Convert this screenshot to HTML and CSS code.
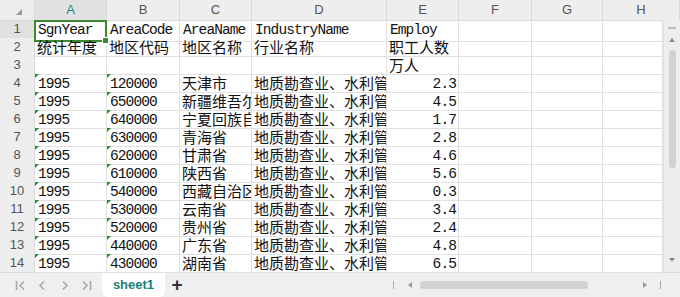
FILE: index.html
```html
<!DOCTYPE html>
<html lang="zh-CN">
<head>
    <meta charset="UTF-8">
    <title>sheet1</title>
    <link rel="stylesheet" href="styles.css">
</head>
<body>
    <div class="book">
        <!-- Column headers -->
        <div class="head-row">
            <div class="corner"><span class="corner-mark"></span></div>
            <div class="col-head active">A</div>
            <div class="col-head">B</div>
            <div class="col-head">C</div>
            <div class="col-head">D</div>
            <div class="col-head">E</div>
            <div class="col-head">F</div>
            <div class="col-head">G</div>
            <div class="col-head">H</div>
            <div class="col-head end"></div>
        </div>

        <div class="body">
            <div class="rows" id="rows"></div>
            <div class="vscroll">
                <span class="vs-line"></span>
                <span class="vs-up"></span>
                <span class="vs-thumb"></span>
                <span class="vs-down"></span>
            </div>
        </div>

        <!-- Sheet tabs and horizontal scroll -->
        <div class="tabbar">
            <div class="tab-nav">
                <svg class="nav" width="11" height="11" viewBox="0 0 11 11"><path d="M1.5 1v9M9 1.5L5 5.5L9 9.5" fill="none" stroke="#a8a8a8" stroke-width="1.6"/></svg>
                <svg class="nav" width="11" height="11" viewBox="0 0 11 11"><path d="M7 1.5L3 5.5L7 9.5" fill="none" stroke="#a8a8a8" stroke-width="1.6"/></svg>
                <svg class="nav" width="11" height="11" viewBox="0 0 11 11"><path d="M4 1.5L8 5.5L4 9.5" fill="none" stroke="#a8a8a8" stroke-width="1.6"/></svg>
                <svg class="nav" width="11" height="11" viewBox="0 0 11 11"><path d="M2 1.5L6 5.5L2 9.5M9.5 1v9" fill="none" stroke="#a8a8a8" stroke-width="1.6"/></svg>
            </div>
            <div class="tab">sheet1</div>
            <div class="add-tab">+</div>
            <div class="hscroll">
                <span class="hs-line"></span>
                <span class="hs-left"></span>
                <span class="hs-thumb"></span>
                <span class="hs-right"></span>
                <span class="hs-line"></span>
            </div>
        </div>
    </div>

    <script>
        const codes = ['120000', '650000', '640000', '630000', '620000', '610000', '540000', '530000', '520000', '440000', '430000'];
        const areas = ['天津市', '新疆维吾尔自治区', '宁夏回族自治区', '青海省', '甘肃省', '陕西省', '西藏自治区', '云南省', '贵州省', '广东省', '湖南省'];
        const employ = ['2.3', '4.5', '1.7', '2.8', '4.6', '5.6', '0.3', '3.4', '2.4', '4.8', '6.5'];

        const rows = [
            [['SgnYear', 'mono'], ['AreaCode', 'mono'], ['AreaName', 'mono'], ['IndustryName', 'mono'], ['Employ', 'mono']],
            [['统计年度', 'zh'], ['地区代码', 'zh'], ['地区名称', 'zh'], ['行业名称', 'zh'], ['职工人数', 'zh']],
            [['', ''], ['', ''], ['', ''], ['', ''], ['万人', 'zh']]
        ];
        codes.forEach((code, i) => {
            rows.push([
                ['1995', 'mono flag'],
                [code, 'mono flag'],
                [areas[i], 'zh'],
                ['地质勘查业、水利管理业', 'zh'],
                [employ[i], 'mono num']
            ]);
        });

        const container = document.getElementById('rows');
        rows.forEach((cells, r) => {
            const row = document.createElement('div');
            row.className = 'row';
            const head = document.createElement('div');
            head.className = 'row-head' + (r === 0 ? ' active' : '');
            head.innerText = r + 1;
            row.appendChild(head);
            for (let c = 0; c < 8; c++) {
                const cell = document.createElement('div');
                const data = cells[c];
                cell.className = 'cell' + (data && data[1] ? ' ' + data[1] : '') + (r === 0 && c === 0 ? ' selected' : '');
                cell.innerText = data ? data[0] : '';
                row.appendChild(cell);
            }
            container.appendChild(row);
        });
    </script>
</body>
</html>
```

FILE: styles.css
```css
/* Spreadsheet view */
body {
    margin: 0;
    background: #ffffff;
    font-family: "Liberation Sans", Arial, sans-serif;
}

.book {
    width: 680px;
    height: 297px;
    display: flex;
    flex-direction: column;
    overflow: hidden;
}

.head-row {
    display: grid;
    grid-template-columns: 35px 72px 73px 72px 135px 72px 73px 71px 77px;
    height: 20px;
}

.corner {
    position: relative;
    background: #eeeeee;
    box-sizing: border-box;
    border-right: 1px solid #d9d9d9;
    border-bottom: 1px solid #d9d9d9;
}
.corner-mark {
    position: absolute;
    right: 12px;
    bottom: 5px;
    width: 0;
    height: 0;
    border-left: 6px solid transparent;
    border-bottom: 6px solid #9a9a9a;
}

.col-head {
    background: #eeeeee;
    color: #555555;
    font-size: 13px;
    line-height: 20px;
    text-align: center;
    box-sizing: border-box;
    border-right: 1px solid #d9d9d9;
    border-bottom: 1px solid #d9d9d9;
}
.col-head.active {
    background: #e1e1e1;
    color: #1c8a7c;
}
.col-head.end {
    border-right: none;
}

.body {
    display: flex;
    height: 252px;
}
.rows {
    width: 663px;
    display: flex;
    flex-direction: column;
}
.row {
    display: grid;
    grid-template-columns: 35px 72px 73px 72px 135px 72px 73px 71px 60px;
    height: 18px;
}

.row-head {
    background: #eeeeee;
    color: #555555;
    font-size: 13px;
    line-height: 18px;
    text-align: center;
    box-sizing: border-box;
    border-right: 1px solid #d9d9d9;
    border-bottom: 1px solid #e2e2e2;
}
.row-head.active {
    background: #e1e1e1;
}

.cell {
    position: relative;
    box-sizing: border-box;
    border-right: 1px solid #e0e0e0;
    border-bottom: 1px solid #e0e0e0;
    padding: 0 2px 0 3px;
    white-space: nowrap;
    overflow: hidden;
    color: #111111;
}
.cell.mono {
    font-family: "Liberation Mono", "Courier New", monospace;
    font-size: 14.5px;
    letter-spacing: -0.9px;
    line-height: 21px;
}
.cell.zh {
    font-family: "Noto Sans CJK SC", sans-serif;
    font-size: 15px;
    line-height: 18px;
    padding-left: 2px;
    padding-right: 0;
}
.cell.num {
    text-align: right;
    padding-right: 2px;
}

/* green marker for numbers stored as text */
.cell.flag::before {
    content: "";
    position: absolute;
    left: 0;
    top: 0;
    border-top: 4px solid #1f8f2b;
    border-right: 4px solid transparent;
}

/* active cell */
.cell.selected {
    overflow: visible;
}
.cell.selected::after {
    content: "";
    position: absolute;
    left: -1px;
    top: 0;
    right: -1px;
    bottom: -1px;
    border: 2px solid #3c8a2e;
}
.cell.selected::before {
    content: "";
    position: absolute;
    right: -3px;
    bottom: -3px;
    width: 5px;
    height: 5px;
    background: #3c8a2e;
    border: 1px solid #ffffff;
    z-index: 2;
}

/* vertical scrollbar */
.vscroll {
    width: 17px;
    box-sizing: border-box;
    background: #eeeeee;
    border-left: 1px solid #e3e3e3;
    display: flex;
    flex-direction: column;
    align-items: center;
    padding-top: 7px;
}
.vs-line {
    width: 8px;
    height: 2px;
    background: #bbbbbb;
}
.vs-up {
    margin-top: 9px;
    border-left: 3px solid transparent;
    border-right: 3px solid transparent;
    border-bottom: 4px solid #888888;
}
.vs-thumb {
    margin-top: 8px;
    width: 7px;
    height: 118px;
    background: #d2d2d2;
    border-radius: 4px;
}
.vs-down {
    margin-top: auto;
    margin-bottom: 10px;
    border-left: 3px solid transparent;
    border-right: 3px solid transparent;
    border-top: 4px solid #888888;
}

/* tab bar */
.tabbar {
    flex: 1;
    display: flex;
    align-items: stretch;
    background: #efefef;
    border-top: 1px solid #dcdcdc;
}
.tab-nav {
    display: flex;
    align-items: center;
    gap: 11px;
    padding-left: 15px;
    width: 102px;
    box-sizing: border-box;
}
.tab {
    width: 63px;
    background: #ffffff;
    border-radius: 0 0 6px 6px;
    color: #1b8078;
    font-weight: bold;
    font-size: 13px;
    text-align: center;
    line-height: 24px;
}
.add-tab {
    width: 24px;
    text-align: center;
    font-size: 19px;
    font-weight: bold;
    color: #333333;
    line-height: 24px;
}
.hscroll {
    flex: 1;
    display: flex;
    align-items: center;
    padding-left: 204px;
    padding-right: 19px;
}
.hs-line {
    width: 1px;
    height: 8px;
    background: #aaaaaa;
}
.hs-left {
    margin-left: 14px;
    border-top: 3px solid transparent;
    border-bottom: 3px solid transparent;
    border-right: 4px solid #999999;
}
.hs-thumb {
    margin-left: 8px;
    width: 168px;
    height: 8px;
    background: #d2d2d2;
    border-radius: 4px;
}
.hs-right {
    margin-left: auto;
    margin-right: 13px;
    border-top: 3px solid transparent;
    border-bottom: 3px solid transparent;
    border-left: 4px solid #999999;
}
```
